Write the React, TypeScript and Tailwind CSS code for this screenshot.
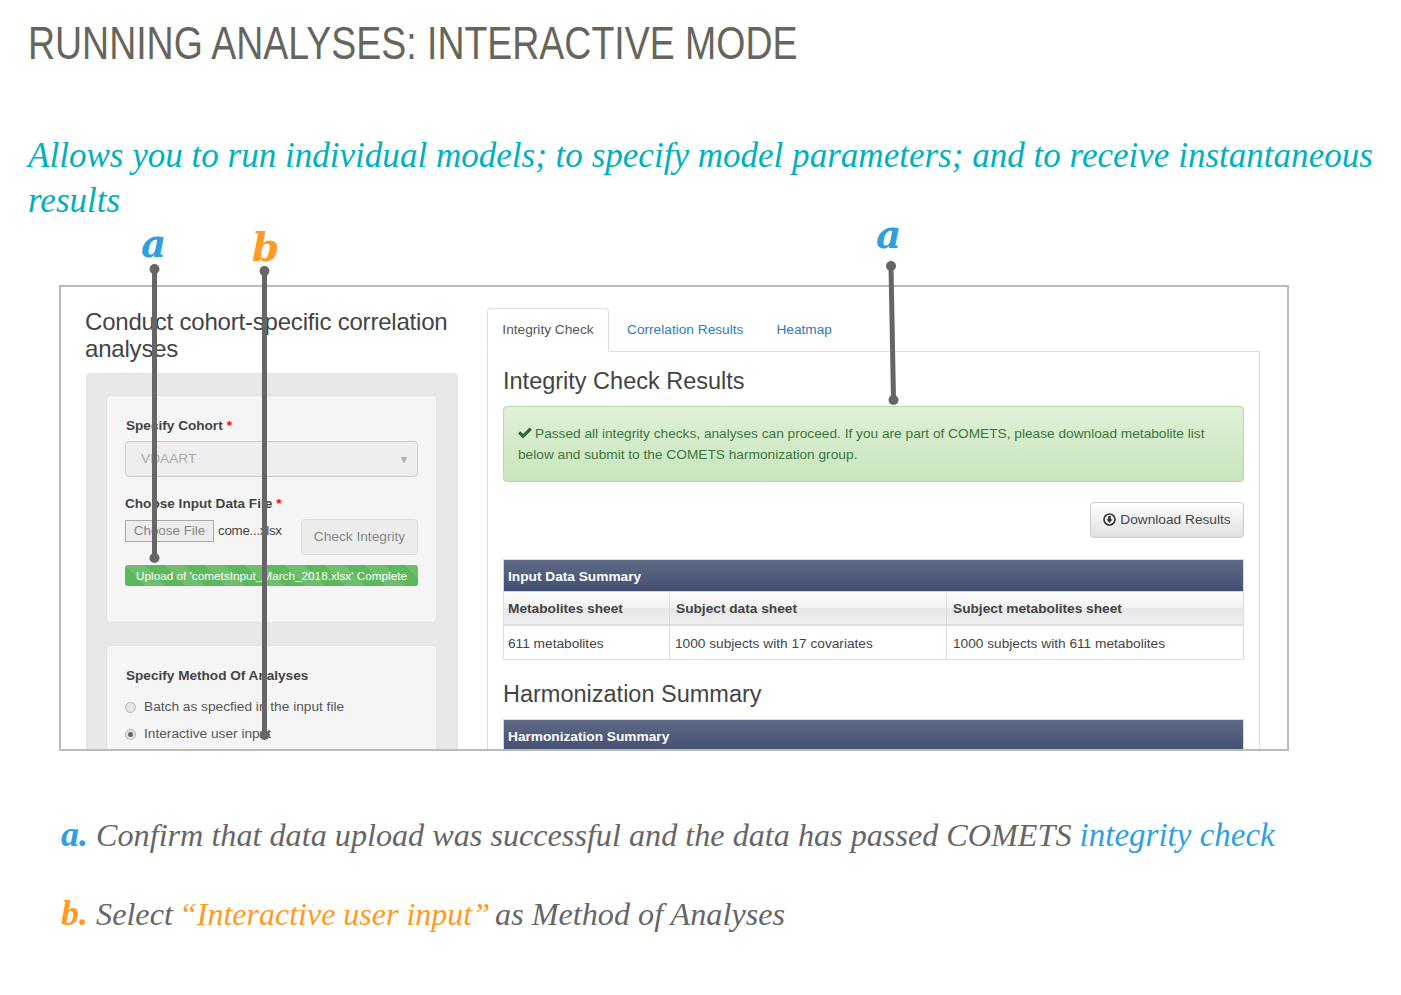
import React from 'react';

const sans = "font-['Liberation_Sans',Arial,sans-serif]";
const serif = "font-['Liberation_Serif',Georgia,serif]";
const mark = "font-['DejaVu_Serif',Georgia,serif]";

const Required = () => <span className="text-[#f00] ml-1">*</span>;

const Radio = ({ label, checked }: { label: string; checked?: boolean }) => (
  <div className="flex items-center h-[27px] text-[13.7px] text-[#555]">
    <span className="w-[11px] h-[11px] rounded-full border border-[#b5b5b5] bg-[#e4e4e4] flex items-center justify-center mr-2">
      {checked && <span className="w-[5px] h-[5px] rounded-full bg-[#666]" />}
    </span>
    {label}
  </div>
);

const TableTitle = ({ children }: { children: React.ReactNode }) => (
  <div className="h-[33px] shrink-0 border border-[#d8d8d8] bg-[linear-gradient(#5f6a86,#434f72)] px-1 pt-[3px] flex items-center text-[13.7px] font-bold text-white">
    {children}
  </div>
);

const Annotations = () => (
  <svg className="absolute left-0 top-0 pointer-events-none" width="1401" height="995">
    <g stroke="#666" strokeWidth="5" fill="#666">
      <line x1="154.5" y1="269" x2="154.5" y2="558" />
      <line x1="264.5" y1="271" x2="264.5" y2="735" />
      <line x1="891" y1="266" x2="893.5" y2="400" />
    </g>
    <g fill="#666">
      <circle cx="154.5" cy="269" r="5" />
      <circle cx="154.5" cy="558" r="5" />
      <circle cx="264.5" cy="271" r="5" />
      <circle cx="264.5" cy="735" r="5" />
      <circle cx="891" cy="266" r="5" />
      <circle cx="893.5" cy="400" r="5" />
    </g>
  </svg>
);

const headCell = 'h-[34px] pt-[3px] border-b-2 border-[#ddd] bg-[linear-gradient(#fcfcfc,#f2f2f2_50%,#e6e6e6_50%,#efefef)] flex items-center font-bold text-[#444]';
const bodyCell = 'h-[33px] pt-[3px] border-[#ddd] flex items-center text-[#444]';

export default function App() {
  return (
    <div className={`relative w-[1401px] h-[995px] overflow-hidden bg-white ${sans}`}>
      <div className="pl-7 pt-[14px]">
        <h1 className="text-[47px] leading-[58px] text-[#66655c] whitespace-nowrap origin-left scale-x-[0.797]">
          RUNNING ANALYSES: INTERACTIVE MODE
        </h1>
        <p className={`mt-[61px] w-[1360px] text-[35.05px] leading-[45px] italic text-[#00b0bd] ${serif}`}>
          Allows you to run individual models; to specify model parameters; and to receive instantaneous
          <br />
          results
        </p>
      </div>

      <div className="ml-[59px] mt-[62px] w-[1230px] h-[466px] border-2 border-[#bbbbbb] overflow-hidden flex">
        {/* left column */}
        <div className="w-[426px] shrink-0 pl-[25px] pr-[29px] pt-[21px]">
          <h3 className="-ml-px text-[24px] leading-[27px] text-[#444] tracking-[-0.2px]">Conduct cohort-specific correlation analyses</h3>
          <div className="mt-[11px] h-[400px] rounded border border-[#e3e3e3] bg-[#e8e8e8] pt-[21px] pl-[19px] pr-[20px]">
            <div className="h-[228px] rounded border border-[#e3e3e3] bg-[#f5f5f5] px-[18px] pt-[21px]">
              <div className="pl-px text-[13.6px] leading-[18px] font-bold text-[#444]">Specify Cohort<Required /></div>
              <div className="mt-[6px] h-[36px] rounded border border-[#ccc] bg-[#eee] pl-[15px] pr-2 flex items-center justify-between text-[13.7px] text-[#aaa]">
                VDAART
                <span className="text-[10px] text-[#aaa]">▼</span>
              </div>
              <div className="mt-[18px] text-[13.6px] leading-[18px] font-bold text-[#444]">Choose Input Data File<Required /></div>
              <div className="mt-[6px] flex items-start">
                <div className="mt-px flex items-center text-[13.4px] text-[#444] w-[176px]">
                  <span className="h-[22px] w-[89px] border border-[#aaa] bg-[#ececec] text-[#888] flex items-center justify-center">Choose File</span>
                  <span className="ml-1 tracking-[-0.3px]">come...xlsx</span>
                </div>
                <div className="h-[36px] w-[117px] rounded border border-[#ddd] bg-[#ececec] text-[13.7px] text-[#888] flex items-center justify-center">Check Integrity</div>
              </div>
              <div className="mt-[10px] h-[21px] rounded-[3px] bg-[#5cb85c] bg-[linear-gradient(45deg,rgba(255,255,255,0.1)_25%,transparent_25%,transparent_50%,rgba(255,255,255,0.1)_50%,rgba(255,255,255,0.1)_75%,transparent_75%)] bg-[length:40px_40px] text-white text-[11.75px] flex items-center justify-center whitespace-nowrap">
                Upload of 'cometsInput_March_2018.xlsx' Complete
              </div>
            </div>
            <div className="mt-[22px] h-[140px] rounded border border-[#e3e3e3] bg-[#f5f5f5] px-[18px] pt-[21px]">
              <div className="pl-px text-[13.6px] leading-[18px] font-bold text-[#444]">Specify Method Of Analyses</div>
              <div className="mt-[9px]">
                <Radio label="Batch as specfied in the input file" />
                <Radio label="Interactive user input" checked />
              </div>
            </div>
          </div>
        </div>

        {/* right column */}
        <div className="w-[773px] shrink-0 flex flex-col">
          <div className="mt-[21px] h-[44px] flex text-[13.7px] border-b border-[#ddd] shrink-0">
            <div className="w-[122px] h-[44px] pt-px rounded-t border border-[#ddd] border-b-white bg-white text-[#555] flex items-center justify-center">Integrity Check</div>
            <div className="ml-[18px] h-[44px] pt-px flex items-center text-[#337ab7]">Correlation Results</div>
            <div className="ml-[33px] h-[44px] pt-px flex items-center text-[#337ab7]">Heatmap</div>
          </div>
          <div className="flex-1 border-x border-[#ddd] px-[15px] flex flex-col">
            <h3 className="mt-[14px] text-[23.5px] leading-[30px] text-[#444]">Integrity Check Results</h3>
            <div className="mt-[10px] h-[76px] shrink-0 rounded border border-[#b2dba1] bg-[linear-gradient(#dff0d8,#c8e5bc)] px-[14px] pt-[16px] text-[13.7px] leading-[21px] text-[#3c763d]">
              <svg className="inline-block mr-[3px] -mt-[3px]" width="14" height="12" viewBox="0 0 14 12" fill="#2f6b30">
                <path d="M0 6.5 L2.2 4.3 L5 7 L11.7 0.5 L14 2.7 L5 11.5 Z" />
              </svg>
              Passed all integrity checks, analyses can proceed. If you are part of COMETS, please download metabolite list below and submit to the COMETS harmonization group.
            </div>
            <div className="mt-[20px] flex justify-end">
              <div className="h-[36px] w-[154px] rounded border border-[#ccc] bg-[linear-gradient(#fff,#e0e0e0)] text-[13.7px] text-[#444] flex items-center justify-center">
                <svg className="mr-[4px] -mt-[2px]" width="13" height="13" viewBox="0 0 13 13">
                  <circle cx="6.5" cy="6.5" r="5.5" fill="none" stroke="#333" strokeWidth="1.6" />
                  <path d="M5.2 3 H7.8 V6.2 H9.6 L6.5 10 L3.4 6.2 H5.2 Z" fill="#333" />
                </svg>
                Download Results
              </div>
            </div>
            <div className="mt-[21px]">
              <TableTitle>Input Data Summary</TableTitle>
            </div>
            <div className="grid grid-cols-[166px_277px_1fr] border-x border-b border-[#ddd] text-[13.7px]">
              <div className={`${headCell} border-r px-1`}>Metabolites sheet</div>
              <div className={`${headCell} border-r px-[6px]`}>Subject data sheet</div>
              <div className={`${headCell} px-[6px]`}>Subject metabolites sheet</div>
              <div className={`${bodyCell} border-r px-1`}>611 metabolites</div>
              <div className={`${bodyCell} border-r px-[5px]`}>1000 subjects with 17 covariates</div>
              <div className={`${bodyCell} px-[6px]`}>1000 subjects with 611 metabolites</div>
            </div>
            <h3 className="mt-[19px] text-[23.5px] leading-[30px] text-[#444]">Harmonization Summary</h3>
            <div className="mt-[10px]">
              <TableTitle>Harmonization Summary</TableTitle>
            </div>
          </div>
        </div>
      </div>

      <div className={`ml-[61px] mt-[59px] text-[32.2px] italic text-[#666] whitespace-nowrap ${serif}`}>
        <p className="leading-[48px]">
          <span className="font-bold text-[36px] text-[#2f9fe0]">a.</span>{' '}
          Confirm that data upload was successful and the data has passed COMETS <span className="text-[33px] text-[#2f9fe0]">integrity check</span>
        </p>
        <p className="mt-[30px] leading-[48px]">
          <span className="font-bold text-[36px] text-[#ff9a22]">b.</span>{' '}
          Select <span className="-ml-[2px] -mr-[3px] text-[32px] text-[#ff9a22]">“Interactive user input”</span> as Method of Analyses
        </p>
      </div>

      <span className={`absolute left-[141px] top-[233px] text-[39px] leading-[20px] font-bold italic text-[#2f9fe0] ${mark}`}>a</span>
      <span className={`absolute left-[252px] top-[237px] text-[39px] leading-[20px] font-bold italic text-[#ff9a22] ${mark}`}>b</span>
      <span className={`absolute left-[876px] top-[224px] text-[39px] leading-[20px] font-bold italic text-[#2f9fe0] ${mark}`}>a</span>
      <Annotations />
    </div>
  );
}
